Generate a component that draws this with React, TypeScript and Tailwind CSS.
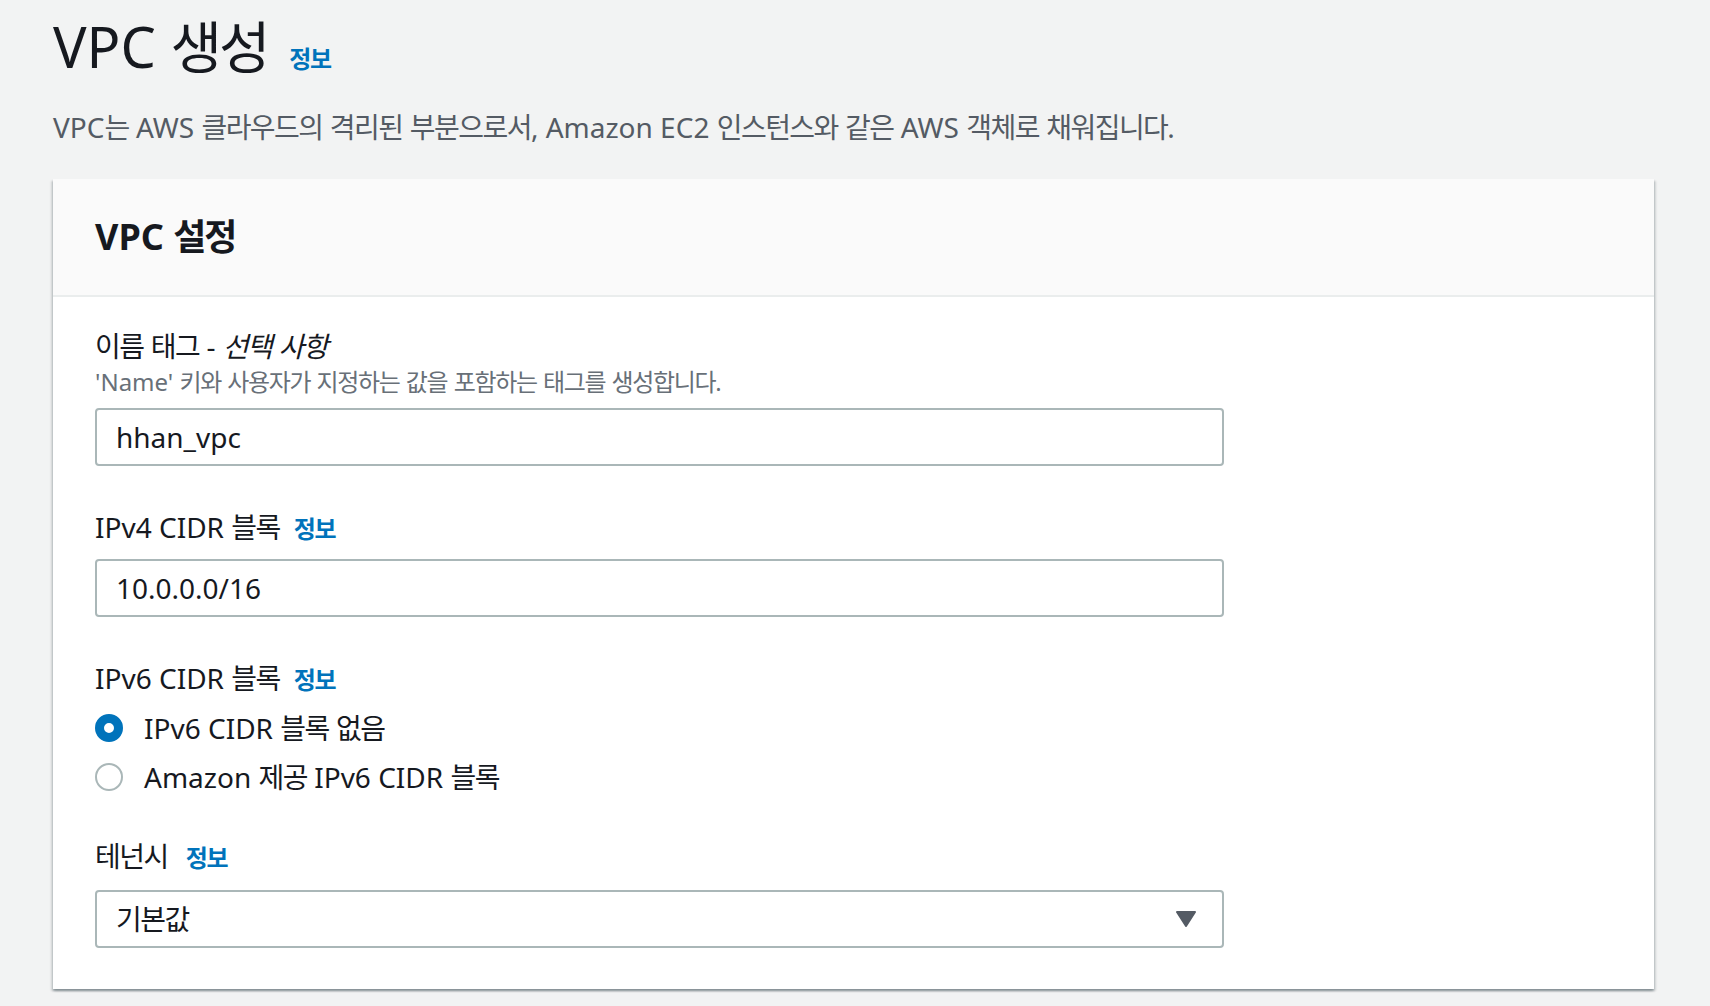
import React from "react";

// Hangul from Noto CJK is wider than the console font, so tighten only the Korean runs
function K({ t }: { t: string }) {
  const parts = t.split(/([\uAC00-\uD7A3]+)/);
  return (
    <>
      {parts.map((p, i) =>
        /[\uAC00-\uD7A3]/.test(p) ? (
          <span key={i} className="tracking-[-0.055em]">{p}</span>
        ) : (
          <React.Fragment key={i}>{p}</React.Fragment>
        )
      )}
    </>
  );
}

function Info() {
  return (
    <span className="text-[24px] font-bold text-[#0073bb] cursor-pointer">
      <K t="정보" />
    </span>
  );
}

function Label({ text, info, gap = "gap-[15px]" }: { text: React.ReactNode; info?: boolean; gap?: string }) {
  return (
    <div className={`flex items-baseline ${gap} text-[28px] leading-[40px] text-[#16191f]`}>
      <span>{text}</span>
      {info && <Info />}
    </div>
  );
}

function Field({ value, select }: { value: string; select?: boolean }) {
  return (
    <div className="w-[1129px] h-[58px] flex items-center justify-between border-2 border-[#aab7b8] rounded-[4px] bg-white pl-[19px] pr-[26px] text-[28px] text-[#16191f]">
      <span>
        <K t={value} />
      </span>
      {select && (
        <svg width="20" height="16" viewBox="0 0 20 16">
          <polygon points="1,1 19,1 10,15" fill="#545b64" stroke="#545b64" strokeWidth="2" strokeLinejoin="round" />
        </svg>
      )}
    </div>
  );
}

function Radio({ checked, text }: { checked?: boolean; text: string }) {
  return (
    <div className="flex items-center h-[40px] gap-[21px]">
      {checked ? (
        <div className="w-[28px] h-[28px] rounded-full border-[9px] border-[#0073bb] bg-white" />
      ) : (
        <div className="w-[28px] h-[28px] rounded-full border-2 border-[#aab7b8] bg-white" />
      )}
      <span className="text-[28px] leading-[40px] text-[#16191f]">
        <K t={text} />
      </span>
    </div>
  );
}

export default function App() {
  return (
    <div className="min-h-screen bg-[#f2f3f3] pl-[53px] pr-[56px] pt-[13px] pb-[18px] font-['Noto_Sans','Noto_Sans_CJK_KR',sans-serif] text-[#16191f]">
      {/* Page header */}
      <div className="flex items-baseline gap-[22px]">
        <h1 className="text-[56px] leading-[67px] font-normal text-[#16191f]">
          <K t="VPC 생성" />
        </h1>
        <Info />
      </div>
      <p className="mt-[27px] text-[28px] leading-[40px] text-[#545b64]">
        <K t="VPC는 AWS 클라우드의 격리된 부분으로서, Amazon EC2 인스턴스와 같은 AWS 객체로 채워집니다." />
      </p>

      {/* VPC settings card */}
      <div className="mt-[32px] bg-white shadow-[0_2px_2px_0_rgba(0,28,36,0.3),2px_2px_2px_0_rgba(0,28,36,0.12),-2px_2px_2px_0_rgba(0,28,36,0.12)]">
        <div className="h-[118px] flex items-center px-[42px] bg-[#fafafa] border-b-2 border-[#eaeded]">
          <h2 className="text-[36px] font-bold text-[#16191f]">
            <K t="VPC 설정" />
          </h2>
        </div>

        <div className="px-[42px] pt-[29px] pb-[41px]">
          <Label
            text={
              <>
                <K t="이름 태그 - " />
                <i><K t="선택 사항" /></i>
              </>
            }
          />
          <div className="text-[24px] leading-[32px] text-[#687078]">
            <K t="'Name' 키와 사용자가 지정하는 값을 포함하는 태그를 생성합니다." />
          </div>
          <div className="mt-[10px]">
            <Field value="hhan_vpc" />
          </div>

          <div className="mt-[41px]">
            <Label text={<K t="IPv4 CIDR 블록" />} info gap="gap-[14px]" />
          </div>
          <div className="mt-[10px]">
            <Field value="10.0.0.0/16" />
          </div>

          <div className="mt-[41px]">
            <Label text={<K t="IPv6 CIDR 블록" />} info gap="gap-[14px]" />
          </div>
          <div className="mt-[8px] flex flex-col gap-[9px]">
            <Radio checked text="IPv6 CIDR 블록 없음" />
            <Radio text="Amazon 제공 IPv6 CIDR 블록" />
          </div>

          <div className="mt-[39px]">
            <Label text={<K t="테넌시" />} info gap="gap-[18px]" />
          </div>
          <div className="mt-[12px]">
            <Field value="기본값" select />
          </div>
        </div>
      </div>
    </div>
  );
}
